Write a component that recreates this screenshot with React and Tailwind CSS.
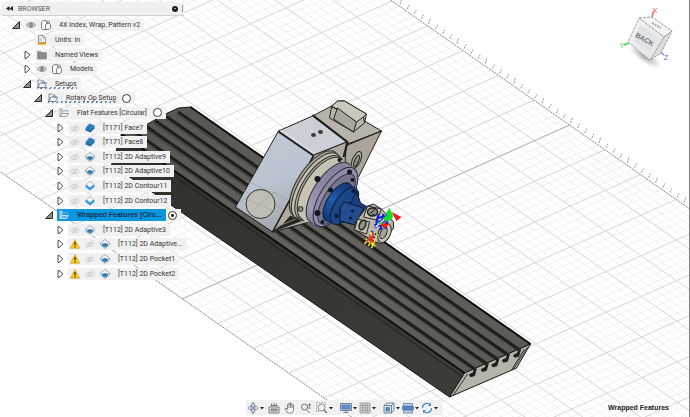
import React from "react";

const INDENT = ["pl-[11px]", "pl-[22px]", "pl-[33px]", "pl-[44px]", "pl-[55px]"];

const TREE = [
  { level: 0, open: true, icons: ["eye", "component"], text: "4X Index, Wrap, Pattern v2" },
  { level: 1, icons: ["units"], text: "Units: in" },
  { level: 1, open: false, icons: ["folder"], text: "Named Views" },
  { level: 1, open: false, icons: ["eye", "component"], text: "Models" },
  { level: 1, open: true, icons: ["setup"], text: "Setups", stale: true },
  { level: 2, open: true, icons: ["setup"], text: "Rotary Op Setup", stale: true, radio: true },
  { level: 3, open: true, icons: ["pattern"], text: "Flat Features [Circular]", radio: true },
  { level: 4, open: false, icons: ["hidden", "face"], text: "[T171] Face7" },
  { level: 4, open: false, icons: ["hidden", "face"], text: "[T171] Face8" },
  { level: 4, open: false, icons: ["hidden", "adaptive"], text: "[T112] 2D Adaptive9" },
  { level: 4, open: false, icons: ["hidden", "adaptive"], text: "[T112] 2D Adaptive10" },
  { level: 4, open: false, icons: ["hidden", "contour"], text: "[T112] 2D Contour11" },
  { level: 4, open: false, icons: ["hidden", "contour"], text: "[T112] 2D Contour12" },
  { level: 3, open: true, icons: ["patternLight"], text: "Wrapped Features [Circ...", radio: true, selected: true },
  { level: 4, open: false, icons: ["hidden", "adaptive"], text: "[T112] 2D Adaptive3" },
  { level: 4, open: false, icons: ["warn", "hidden", "adaptive"], text: "[T112] 2D Adaptive..." },
  { level: 4, open: false, icons: ["warn", "hidden", "adaptive"], text: "[T112] 2D Pocket1" },
  { level: 4, open: false, icons: ["warn", "hidden", "adaptive"], text: "[T112] 2D Pocket2" },
];

const GLYPHS = {
  eye: (
    <g fill="none" stroke="#858585">
      <path d="M1 10Q10 0 19 10Q10 20 1 10Z" strokeWidth="2" fill="#e2e2e2" />
      <circle cx="10" cy="10" r="3.4" fill="#8c8c8c" strokeWidth="1.5" />
    </g>
  ),
  hidden: (
    <g fill="none" stroke="#cfcfcf" strokeWidth="1.8">
      <path d="M1 11Q10 1 19 11Q10 20 1 11Z" />
      <circle cx="10" cy="10.5" r="3" />
      <path d="M3 18L17 2" />
    </g>
  ),
  component: (
    <g fill="#f8f8f8" stroke="#6b6b6b" strokeWidth="1.7" strokeLinejoin="round">
      <path d="M1 4L5 1H10L12 4V17L9 19H3L1 17Z" />
      <path d="M9 10L12 7H17L19 9V16L16 19H9Z" />
      <path d="M12 7V3L14 1L17 4V7" fill="none" />
    </g>
  ),
  units: (
    <g>
      <path d="M3 1H12L17 6V15H3Z" fill="#f4f6f8" stroke="#76828e" strokeWidth="1.6" />
      <path d="M12 1V6H17M6 5V12M9 8V12" fill="none" stroke="#76828e" strokeWidth="1.2" />
      <path d="M2 14.500H18V19H2Z" fill="#dd9b1f" />
    </g>
  ),
  folder: <path d="M1 3H7L9 5H19V18H1Z" fill="#8b8b8b" stroke="#777" />,
  setup: (
    <g fill="#f5f5f5" stroke="#65717e" strokeWidth="1.6" strokeLinejoin="round">
      <path d="M2 17V2H7L9 4H14V8" />
      <path d="M2 17L6 8H19L15 17Z" />
      <path d="M10 6L13 10L16 6" fill="none" stroke="#4b86bd" />
    </g>
  ),
  pattern: (
    <g fill="none" stroke="#71808d" strokeWidth="1.4" strokeLinejoin="round">
      <path d="M2 17V2H6V11M2 17H15L19 11H6L2 17" />
      <path d="M9 7L11 4L13 7M15 7L17 4L18 7" stroke="#3e86c4" />
    </g>
  ),
  patternLight: (
    <g fill="none" stroke="#d8ecf8" strokeWidth="1.6" strokeLinejoin="round">
      <path d="M2 17V2H6V11M2 17H15L19 11H6L2 17" fill="#65b4df" />
      <path d="M9 6H12M15 6H18" />
    </g>
  ),
  face: (
    <g>
      <path d="M1 11L8 2L19 5V11L11 19L1 15Z" fill="#1f6fa9" />
      <path d="M1 10L9 1L19 5L11 14Z" fill="#3d93ce" />
      <path d="M4 8L14 12M7 5L17 8M6 12L13 3" stroke="#1a5c92" strokeWidth="1.2" />
    </g>
  ),
  adaptive: (
    <g strokeLinejoin="round">
      <path d="M10 1L19 8V12L10 19L1 12V8Z" fill="#f1f4f6" stroke="#7c8992" strokeWidth="1.3" />
      <path d="M4 10Q10 7 16 10V13L10 17L4 13Z" fill="#1875b5" />
      <path d="M1 8L10 14L19 8" fill="none" stroke="#8f9ca5" strokeWidth="1" />
    </g>
  ),
  contour: (
    <g strokeLinejoin="round">
      <path d="M10 1L18 8L10 15L2 8Z" fill="#fafcfd" stroke="#8796a2" strokeWidth="1.3" />
      <path d="M1 8L4 8L10 13L16 8L19 8V12L10 19L1 12Z" fill="#3a9bdc" />
    </g>
  ),
  warn: (
    <g>
      <path d="M10 1L19.500 18.500H0.500Z" fill="#f9cb22" stroke="#c39a22" strokeWidth="1.2" strokeLinejoin="round" />
      <path d="M10 6V12.500M10 14.500V17" stroke="#2c2508" strokeWidth="2.4" />
    </g>
  ),
};

function Icon({ name }) {
  return (
    <svg viewBox="0 0 20 20" className="size-[10px] shrink-0" aria-hidden="true">
      {GLYPHS[name]}
    </svg>
  );
}

function Twisty({ open, label }) {
  if (open === undefined) return <span className="w-[10px] shrink-0" />;
  return (
    <button type="button" aria-label={(open ? "Collapse " : "Expand ") + label} className="grid w-[10px] shrink-0 place-items-center">
      <svg viewBox="0 0 20 20" className="size-[10px]">
        {open ? (
          <path d="M17 3V17H3Z" fill="#8d8d8d" stroke="#2b2b2b" strokeWidth="2" />
        ) : (
          <path d="M6 3H8L15 9V11L8 17H6Z" fill="#fafafa" stroke="#2b2b2b" strokeWidth="1.7" />
        )}
      </svg>
    </button>
  );
}

function TreeRow({ row }) {
  const { level, open, icons, text, stale, radio, selected } = row;
  return (
    <li role="treeitem" aria-level={level + 1} aria-expanded={open} aria-selected={!!selected} className={"flex items-center " + INDENT[level]}>
      <Twisty open={open} label={text} />
      <button
        type="button"
        className={
          "ml-[3px] flex h-[12px] items-center whitespace-nowrap pr-1 pl-[2px] " +
          (selected ? "bg-[#0d97dc] font-['Liberation_Sans',sans-serif] font-bold text-[#06365c]" : "bg-[#f1f1f1] text-[#333]")
        }
      >
        <span
          className={
            "flex h-[10px] items-center leading-[10px] " +
            (stale
              ? "bg-[repeating-linear-gradient(115deg,#5c7fae_0px,#5c7fae_1px,#f1f1f1_2px,#f1f1f1_4px)] bg-[length:100%_2px] bg-bottom bg-no-repeat"
              : "")
          }
        >
          <span className="mr-2 flex gap-[5px]">
            {icons.map((name) => (
              <Icon key={name} name={name} />
            ))}
          </span>
          {text}
        </span>
      </button>
      {radio && (
        <span className="flex h-[12px] items-center bg-[#f1f1f1] pr-1 pl-[2px]">
          <input
            type="radio"
            name="active-setup"
            aria-label={"Activate " + text}
            defaultChecked={!!selected}
            className="size-[9px] appearance-none rounded-full border border-[#3a3a3a] bg-white checked:bg-[radial-gradient(circle,#222_0px,#222_1px,#fff_2px)]"
          />
        </span>
      )}
    </li>
  );
}

/* Work plane: origin on the far edge, one step along the edge and one step across it. */
const O = [570, 125];
const U = [35.5, 24.8];
const V = [-35.2, 15.8];
const at = (u, v) => [O[0] + u * U[0] + v * V[0], O[1] + u * U[1] + v * V[1]];
const seg = (a, b) => `M${a[0]} ${a[1]}L${b[0]} ${b[1]}`;

const range = (from, to) => Array.from({ length: to - from + 1 }, (_, i) => from + i);
const minorPath =
  range(-100, 60).map((i) => seg(at(i / 5, 0), at(i / 5, 11))).join("") +
  range(0, 55).map((i) => seg(at(-20, i / 5), at(12, i / 5))).join("");
const majorPath =
  range(-20, 12).map((i) => seg(at(i, 0), at(i, 11))).join("") +
  range(1, 10).map((i) => seg(at(-20, i), at(12, i))).join("");
const edgePath = seg(at(-20, 0), at(12, 0)) + seg(at(-20, 11), at(12, 11));
const tickPath = range(-30, 20)
  .map((i) => {
    const [x, y] = at(i / 5, 0);
    return seg([x + 1, y - 2], [x + 3, y - (i % 4 === 0 ? 8 : 6)]);
  })
  .join("");

const slots = [0.15, 0.33, 0.49, 0.65, 0.82].map((t) => ({
  a: [122 + 69 * t, 134 - 27 * t],
  b: [465 + 66 * t, 373 - 29 * t],
}));

function Disc({ x, y, r, s, ...rest }) {
  return <ellipse cx={x} cy={y} rx={r} ry={s} transform={`rotate(-57 ${x} ${y})`} {...rest} />;
}

function Scene() {
  return (
    <svg viewBox="0 0 690 417" preserveAspectRatio="xMidYMid slice" className="absolute inset-0 h-full w-full" role="img" aria-label="Rotary fixture on machine table">
      <defs>
        <linearGradient id="top" x1="0" y1="0" x2="1" y2="1">
          <stop offset="0" stopColor="#55544f" />
          <stop offset="0.5" stopColor="#64635e" />
          <stop offset="1" stopColor="#5a5954" />
        </linearGradient>
        <linearGradient id="side" x1="0" y1="0" x2="1" y2="1">
          <stop offset="0" stopColor="#2f2f2b" />
          <stop offset="1" stopColor="#3d3c38" />
        </linearGradient>
        <linearGradient id="plate" x1="0" y1="0" x2="0.3" y2="1">
          <stop offset="0" stopColor="#c4cbd7" />
          <stop offset="0.6" stopColor="#bac3cf" />
          <stop offset="1" stopColor="#a7aaae" />
        </linearGradient>
        <linearGradient id="lilac" x1="0" y1="1" x2="1" y2="0">
          <stop offset="0" stopColor="#5d5a70" />
          <stop offset="0.5" stopColor="#a09db9" />
          <stop offset="1" stopColor="#77738f" />
        </linearGradient>
        <linearGradient id="blue" x1="0" y1="0" x2="1" y2="0">
          <stop offset="0" stopColor="#123775" />
          <stop offset="0.5" stopColor="#1d5cb0" />
          <stop offset="1" stopColor="#16346f" />
        </linearGradient>
      </defs>

      <path d={minorPath} stroke="#f0f0f0" fill="none" />
      <path d={majorPath} stroke="#dadada" fill="none" />
      <path d={seg(at(0, 0), at(0, 11))} stroke="#b5b5b5" />
      <path d={edgePath} stroke="#8c8c8c" strokeDasharray="2 1" />
      <path d={tickPath} stroke="#8e8e8e" strokeDasharray="2 1" />

      {/* machine table */}
      <path d="M122 134L465 373L450 397L154 193L112 165Z" fill="url(#side)" stroke="#161614" />
      <path d="M122 134L148 124L157 119L168 113L179 108L191 107L531 344L465 373Z" fill="url(#top)" stroke="#161614" />
      <path d="M465 373L531 344L517 368L450 397Z" fill="#b5b4aa" stroke="#161614" />
      <path d="M468 374L454 395M528 347L514 369M525 349L512 370" stroke="#33332f" />
      {slots.map(({ a, b }, i) => (
        <g key={i} fill="none">
          <path d={seg(a, b)} stroke="#1d1d1a" strokeWidth="3" />
          <path d={seg([a[0] - 2, a[1] + 2], [b[0] - 2, b[1] + 1])} stroke="#3c3b37" />
          <path d={`M${b[0]} ${b[1]}l-1 4l-4 2l1 2l4 -1l2 -7`} fill="#1d1d1a" stroke="#1d1d1a" />
        </g>
      ))}
      <path d="M122 134L465 373" stroke="#10100f" strokeWidth="2" />
      <path d="M120 138L463 377" stroke="#1f1f1c" />
      <path d="M191 107L531 344" stroke="#10100f" strokeWidth="2" />

      {/* rear housing */}
      <g stroke="#23221f" strokeLinejoin="round">
        <path d="M313 116L336 104L382 131L348 145Z" fill="#b8b3a8" />
        <path d="M382 131L359 177L340 168L348 145Z" fill="#aaa598" />
        <path d="M348 144L382 131" strokeWidth="1" />
        <ellipse cx="357" cy="160" rx="4" ry="9" transform="rotate(24 357 160)" fill="#b3aea2" />
        <ellipse cx="357" cy="161" rx="2" ry="6" transform="rotate(24 357 161)" fill="#8d897e" />
        <path d="M338 101L345 101L367 114L365 123L354 132L330 118L332 107Z" fill="#bbb7aa" />
        <path d="M332 106L338 101L345 101L367 114L364 117L357 122Z" fill="#cbc7bb" />
        <path d="M338 108L357 122L354 132L334 119Z" fill="#a9a79d" />
        <path d="M364 117L365 123M332 107L338 109" />
      </g>

      {/* front housing */}
      <g stroke="#1e1e1e" strokeLinejoin="round">
        <path d="M314 155L347 142L345 170L310 222L273 232Z" fill="#aeaa9e" />
        <path d="M279 131L314 155L273 232L236 207Z" fill="url(#plate)" />
        <path d="M279 131L313 116L347 142L314 155Z" fill="#ccd0d6" />
        <path d="M313 115L348 142L344 157" fill="none" strokeWidth="2" />
        <path d="M279 132L314 156L273 232" fill="none" strokeWidth="1.500" />
        <path d="M281 130L315 153" stroke="#e6e8ec" />
        <path d="M274 231L301 221L291 216L283 225Z" fill="#26251f" />
        <path d="M277 227L296 219" stroke="#8d897c" />
      </g>
      <path d="M247 181L290 200M243 190L284 210M252 205L277 192M240 202L266 189" stroke="#9aa2ad" opacity="0.6" />
      <circle cx="261" cy="204" r="14.500" fill="#bfbeb5" stroke="#33332f" />
      <path d="M249 200L274 211M252 212L271 194" stroke="#a9a8a0" opacity="0.7" />
      <ellipse cx="314" cy="135" rx="2.500" ry="2" fill="#3b3b3b" />
      <ellipse cx="321" cy="132" rx="2.500" ry="2" fill="#3b3b3b" />

      {/* flange rings */}
      <g stroke="#2d2b27">
        <Disc x={315} y={184} r={38} s={17} fill="#a8a497" />
        <Disc x={317} y={186} r={38} s={17} fill="#c3bfb1" />
        <Disc x={320} y={188} r={37} s={17} fill="#b3afa2" />
        <Disc x={322} y={189} r={36} s={17} fill="#c9c5b6" />
        <Disc x={325} y={191} r={36} s={17} fill="#c6c2b4" stroke="none" />
      </g>
      <Disc x={330} y={193} r={35} s={16} fill="url(#lilac)" stroke="#2a2838" />
      <Disc x={333} y={195} r={35} s={16} fill="url(#lilac)" />
      <Disc x={336} y={197} r={34} s={15} fill="#8e8ba6" stroke="#2a2838" />
      <Disc x={337} y={199} r={29} s={12} fill="#77748d" stroke="#34314a" />
      <g fill="#17161f">
        <circle cx="318" cy="179" r="3" />
        <circle cx="340" cy="160" r="2" />
        <circle cx="301" cy="209" r="2.500" fill="#8f8b80" stroke="#2d2b27" />
        <circle cx="331" cy="190" r="2.500" />
        <circle cx="350" cy="172" r="2.500" />
        <circle cx="318" cy="213" r="3" />
        <circle cx="353" cy="180" r="2" />
        <circle cx="323" cy="222" r="2" />
      </g>

      {/* chuck nose */}
      <Disc x={338} y={202} r={22} s={10} fill="url(#blue)" stroke="#0c1c3d" />
      <Disc x={341} y={204} r={22} s={10} fill="url(#blue)" />
      <Disc x={345} y={206} r={21} s={10} fill="#1b4688" stroke="#0c1c3d" />
      <path d="M357 191L361 203L368 207L356 225L340 221L341 207L352 202Z" fill="#1d3f80" stroke="#0b1733" />
      <path d="M341 207L345 202L364 208L356 225L340 221Z" fill="#244c91" stroke="#0b1733" />
      <g fill="#0a1530">
        <circle cx="354" cy="191" r="2" />
        <circle cx="337" cy="216" r="2" />
        <circle cx="353" cy="211" r="1.500" />
        <circle cx="351" cy="218" r="1.500" />
      </g>

      {/* workpiece and toolpaths */}
      <g stroke="#24231f" strokeLinejoin="round">
        <path d="M368 206L374 204L382 209L394 222L394 228L382 244L376 242L355 230L356 222Z" fill="#b9b7aa" />
        <path d="M368 206L382 209L377 220L364 217Z" fill="#cbc8bb" />
        <path d="M358 219L370 222L367 234L355 230Z" fill="#c3c0b2" />
        <ellipse cx="373" cy="212" rx="5" ry="4" fill="#8e8c82" strokeWidth="1.500" />
        <ellipse cx="363" cy="225" rx="3" ry="5" transform="rotate(24 363 225)" fill="#969489" strokeWidth="1.500" />
        <ellipse cx="385" cy="233" rx="6" ry="10" transform="rotate(24 385 233)" fill="#c6c4b8" />
        <ellipse cx="384" cy="233" rx="3" ry="6" transform="rotate(24 384 233)" fill="#a5a399" />
        <path d="M370 214L376 209M371 216L375 214" stroke="#1b1b1b" />
      </g>
      <g fill="none" strokeWidth="1.500">
        <path d="M377 218L389 216M376 222L388 221M375 225L387 226M379 214L376 228M384 214L381 230M388 219L386 229" stroke="#1414e6" strokeWidth="2" />
        <path d="M372 231L377 235M370 235L376 238M368 240L374 241" stroke="#1414e6" />
        <path d="M371 232L373 247M375 232L369 246M366 239L376 246M365 244L372 236M378 234L372 248" stroke="#efe326" />
        <path d="M370 236L374 242M374 233L371 243M367 241L371 238" stroke="#ee1c1c" />
        <path d="M376 227L390 215" stroke="#eee" />
      </g>
      <path d="M390 208L394 217L386 214ZM383 218L392 213L393 218L386 222ZM377 221L388 225L384 228Z" fill="#14df22" />
      <path d="M392 212L402 217L397 221ZM383 223L389 224L387 228L381 226Z" fill="#f01818" />
    </svg>
  );
}

function ViewCube() {
  return (
    <svg viewBox="612 0 78 72" className="h-[72px] w-[78px] font-['Liberation_Sans',sans-serif]" role="img" aria-label="View cube">
      <defs>
        <radialGradient id="shade">
          <stop offset="0" stopColor="#777" stopOpacity="0.75" />
          <stop offset="1" stopColor="#999" stopOpacity="0" />
        </radialGradient>
        <linearGradient id="cubeFace" x1="0" y1="0" x2="1" y2="1">
          <stop offset="0" stopColor="#f4f4f4" />
          <stop offset="1" stopColor="#e2e2e2" />
        </linearGradient>
      </defs>
      <ellipse cx="646" cy="56" rx="19" ry="7" transform="rotate(36 646 56)" fill="url(#shade)" />
      <path d="M652 19L655 11" stroke="#f06a6a" strokeWidth="1.500" />
      <path d="M630 43L625 45" stroke="#5fdc5f" strokeWidth="2" />
      <path d="M660 51L665 55" stroke="#7c7cf0" strokeWidth="1.500" />
      <g strokeLinejoin="round">
        <path d="M640 18L653 17L673 31L665 37Z" fill="#f5f5f5" stroke="#9a9a9a" strokeDasharray="3 1" />
        <path d="M665 37L673 31L662 53L651 60Z" fill="#dedede" stroke="#9a9a9a" strokeDasharray="3 1" />
        <path d="M640 18L665 37L651 60L629 42Z" fill="url(#cubeFace)" stroke="#a8a8a8" strokeDasharray="3 1" />
      </g>
      <path d="M653 23L662 28" stroke="#aaa" strokeWidth="2" strokeDasharray="2 1" />
      <path d="M641 25L658 37L651 53L635 41Z" fill="#e0e2e5" />
      <text x="646" y="42" textAnchor="middle" fontSize="7" fontWeight="700" fill="#70757c" transform="rotate(30 646 39)">BACK</text>
      <text x="656" y="13" textAnchor="middle" fontSize="8" fill="#f25b5b">X</text>
      <text x="623" y="48" textAnchor="middle" fontSize="8" fill="#4fd84f">Y</text>
      <text x="667" y="60" textAnchor="middle" fontSize="8" fill="#6f6ff0">Z</text>
    </svg>
  );
}

const TOOLS = {
  Orbit: (
    <g fill="none" stroke="#6d7680" strokeWidth="1.600">
      <ellipse cx="12" cy="12" rx="10" ry="4" />
      <ellipse cx="12" cy="12" rx="4" ry="10" />
      <path d="M9 5L12 1L15 5M9 19L12 23L15 19" />
      <circle cx="12" cy="12" r="2" fill="#2f8fd6" stroke="none" />
    </g>
  ),
  "Look At": (
    <g fill="#ececec" stroke="#6b6b6b" strokeWidth="1.800">
      <path d="M2 10H22V22H2Z" />
      <path d="M6 14H18V18H6Z" fill="#bbb" />
      <path d="M5 7H19M7 7V3M12 7V2M17 7V3" />
    </g>
  ),
  Pan: (
    <g fill="#f5f5f5" stroke="#666" strokeWidth="1.500" strokeLinejoin="round">
      <path d="M7 22L2 13L4 12L7 15V5L9 4L10 5V2H13V4L16 3V6L19 6V17L16 22Z" />
      <path d="M10 5V12M13 4V12M16 6V12" fill="none" />
    </g>
  ),
  Zoom: (
    <g fill="none" stroke="#666" strokeWidth="1.900">
      <circle cx="9" cy="10" r="6" fill="#eef4f8" />
      <path d="M13 15L19 22M16 6H22M19 3V9M16 12H22" />
    </g>
  ),
  Fit: (
    <g fill="none" stroke="#777" strokeWidth="1.700">
      <path d="M1 1H19V8M1 1V19H8" strokeDasharray="3 2" stroke="#9b9b9b" />
      <circle cx="11" cy="11" r="7" fill="#e8f1ed" />
      <path d="M16 16L22 22" strokeWidth="3" />
    </g>
  ),
  "Display Settings": (
    <g stroke="#5e6b7a" strokeWidth="1.600">
      <path d="M1 3H23V17H1Z" fill="#c9d4df" />
      <path d="M4 6H20V14H4Z" fill="#5b8fd0" stroke="#4577b4" />
      <path d="M7 21H17M12 17V21" />
    </g>
  ),
  Grid: (
    <g stroke="#8d8d8d" strokeWidth="1.400">
      <path d="M2 2H22V22H2Z" fill="#dcdcdc" />
      <path d="M7 2V22M12 2V22M17 2V22M2 7H22M2 12H22M2 17H22" />
    </g>
  ),
  Viewports: (
    <g fill="#dfe8f1" stroke="#58728d" strokeWidth="1.700" strokeLinejoin="round">
      <path d="M2 7L8 2H22V16L17 22H2Z" />
      <path d="M2 7H17V22M17 7L22 2" fill="none" />
      <path d="M6 11H13V18H6Z" fill="#4e8fd3" />
    </g>
  ),
  Analysis: (
    <g strokeWidth="1.500">
      <path d="M3 3H21V8H3ZM3 17H21V22H3Z" fill="#c4d2df" stroke="#60768c" />
      <path d="M1 9H23V15H1Z" fill="#4f88ca" stroke="#3b6da9" />
    </g>
  ),
  Refresh: (
    <g fill="none" stroke="#3f87c9" strokeWidth="2.200">
      <path d="M3 12A9 9 0 0 1 19 6M21 12A9 9 0 0 1 5 18" />
      <path d="M20 1V8H14ZM4 23V16H10Z" fill="#3f87c9" stroke="none" />
    </g>
  ),
};

const GROUPS = [
  { gap: "gap-[3px]", items: [["Orbit", true], ["Look At", false], ["Pan", false], ["Zoom", false], ["Fit", true]] },
  { gap: "gap-[1px]", items: [["Display Settings", true], ["Grid", true]] },
  { gap: "gap-[1px]", items: [["Viewports", true], ["Analysis", true], ["Refresh", true]] },
];

function Toolbar() {
  return (
    <nav aria-label="Navigation bar" className="flex h-[15px] items-center gap-[6px] bg-[#f1f1f1] pr-1 pl-px">
      {GROUPS.map(({ gap, items }) => (
        <div key={items[0][0]} className={"flex items-center " + gap}>
          {items.map(([name, menu]) => (
            <button key={name} type="button" aria-label={name} className="flex items-center gap-[1px] pr-px">
              <svg viewBox="0 0 24 24" className="size-[12px]">{TOOLS[name]}</svg>
              {menu && (
                <svg viewBox="0 0 8 8" className="size-[4px]">
                  <path d="M0 2H8L4 7Z" fill="#222" />
                </svg>
              )}
            </button>
          ))}
        </div>
      ))}
    </nav>
  );
}

export default function App() {
  return (
    <main className="relative flex h-screen flex-col justify-between overflow-hidden border-r border-[#808080] bg-white font-[Roboto,'Liberation_Sans',sans-serif] text-[7px] leading-[10px]">
      <Scene />
      <div className="relative flex items-start justify-between">
        <aside className="pt-[2px]">
          <header className="ml-[2px] flex h-[14px] w-[182px] items-center border-b border-[#d2d2d2] bg-[#f0f0f0] pl-1 text-[#555]">
            <button type="button" aria-label="Collapse browser" className="mr-[5px]">
              <svg viewBox="0 0 14 10" className="h-[5px] w-[7px]">
                <path d="M7 0V10L0 5ZM14 0V10L7 5Z" fill="#222" />
              </svg>
            </button>
            <h1 className="flex-1">BROWSER</h1>
            <button type="button" aria-label="Browser options" className="mr-1 grid size-[6px] place-items-center rounded-full bg-[#1d1d1d]">
              <span className="h-px w-[2px] bg-[#aaa]" />
            </button>
            <span className="mr-px h-[7px] w-px bg-[#9a9a9a]" />
          </header>
          <ul role="tree" aria-label="Browser" className="mt-[2px] grid h-[263px] auto-rows-fr">
            {TREE.map((row) => (
              <TreeRow key={row.text} row={row} />
            ))}
          </ul>
        </aside>
        <ViewCube />
      </div>
      <footer className="relative grid grid-cols-[1fr_auto_1fr] items-center pb-[2px]">
        <span />
        <Toolbar />
        <p className="justify-self-end pr-5 font-['Liberation_Sans',sans-serif] font-bold text-[#222]">Wrapped Features</p>
      </footer>
    </main>
  );
}
